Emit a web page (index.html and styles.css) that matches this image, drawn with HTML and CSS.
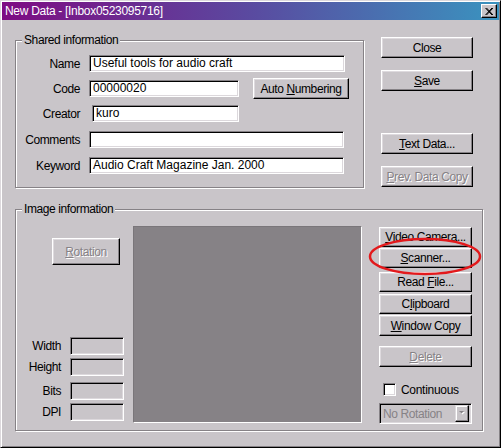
FILE: index.html
```html
<!DOCTYPE html>
<html>
<head>
<meta charset="utf-8">
<title>New Data</title>
<link rel="stylesheet" href="styles.css">
</head>
<body>
<div class="window">
  <div class="titlebar">
    <span class="title">New Data - [Inbox0523095716]</span>
    <span class="tb-btn"><svg width="8" height="7" viewBox="0 0 8 7"><path d="M0.5 0L7 7M1.5 0L8 7M7 0L0.5 7M8 0L1.5 7" stroke="#000" stroke-width="1" fill="none"/></svg></span>
  </div>
  <div class="client">
    <div class="top">
      <div class="group shared">
        <span class="group-label">Shared information</span>
        <div class="row r-name"><span class="lbl">Name</span><span class="input w-name">Useful tools for audio craft</span></div>
        <div class="row r-code"><span class="lbl">Code</span><span class="input w-code">00000020</span><span class="btn b-auto"><span>Auto <u>N</u>umbering</span></span></div>
        <div class="row r-creator"><span class="lbl">Creator</span><span class="input w-creator">kuro</span></div>
        <div class="row r-comments"><span class="lbl">Comments</span><span class="input w-wide"></span></div>
        <div class="row r-keyword"><span class="lbl">Keyword</span><span class="input w-wide">Audio Craft Magazine Jan. 2000</span></div>
      </div>
      <div class="side">
        <span class="btn b-close"><span>Close</span></span>
        <span class="btn b-save"><span><u>S</u>ave</span></span>
        <span class="btn b-text"><span><u>T</u>ext Data...</span></span>
        <span class="btn b-prev disabled"><span><u>P</u>rev. Data Copy</span></span>
      </div>
    </div>
    <div class="group image">
      <span class="group-label">Image information</span>
      <div class="img-left">
        <span class="btn b-rot disabled"><span><u>R</u>otation</span></span>
        <div class="frow f1"><span class="flbl">Width</span><span class="field"></span></div>
        <div class="frow f2"><span class="flbl">Height</span><span class="field"></span></div>
        <div class="frow f3"><span class="flbl">Bits</span><span class="field"></span></div>
        <div class="frow f4"><span class="flbl">DPI</span><span class="field"></span></div>
      </div>
      <div class="preview"></div>
      <div class="img-right">
        <span class="btn ib b-video"><span><u>V</u>ideo Camera...</span></span>
        <span class="btn ib b-scan"><span><u>S</u>canner...</span></span>
        <span class="btn ib b-read"><span>Read <u>F</u>ile...</span></span>
        <span class="btn ib b-clip"><span>C<u>l</u>ipboard</span></span>
        <span class="btn ib b-win"><span><u>W</u>indow Copy</span></span>
        <span class="btn ib b-del disabled"><span><u>D</u>elete</span></span>
        <div class="check-row"><span class="checkbox"></span><span class="check-lbl">Continuous</span></div>
        <div class="combo"><span class="combo-text">No Rotation</span><span class="combo-btn"><svg width="6" height="5" viewBox="0 0 6 5"><path d="M1 1H6L3.5 3.5Z" fill="#fff"/><path d="M0 0H5L2.5 2.5Z" fill="#868286"/></svg></span></div>
      </div>
    </div>
  </div>
  <svg class="mark" width="116" height="42" viewBox="0 0 116 42"><ellipse cx="58" cy="20.5" rx="55" ry="17.5" fill="none" stroke="#e3191c" stroke-width="2.5"/></svg>
</div>
</body>
</html>
```
FILE: styles.css
```css
* { box-sizing: border-box; }
html, body { margin: 0; padding: 0; }
body {
  width: 501px;
  height: 448px;
  overflow: hidden;
  background: #c9c5c9;
  font-family: "Liberation Sans", Arial, sans-serif;
  font-size: 12px;
  color: #000;
}
.window {
  position: relative;
  width: 501px;
  height: 448px;
  background: #c9c5c9;
  border: 1px solid;
  border-color: #dcd8dc #000 #000 #dcd8dc;
  box-shadow: inset 1px 1px 0 #fff, inset -1px -1px 0 #868286;
  padding: 1px;
  display: flex;
  flex-direction: column;
}
.titlebar {
  height: 18px;
  flex: none;
  display: flex;
  align-items: center;
  justify-content: space-between;
  padding: 0 2px 0 3px;
  background: linear-gradient(to right, #7e0c82, #5a4aa0 50%, #3a93bf);
}
.title {
  color: #fff;
  font-size: 12px;
  letter-spacing: -0.3px;
}
.tb-btn {
  width: 16px;
  height: 14px;
  display: flex;
  align-items: center;
  justify-content: center;
  background: #c9c5c9;
  border: 1px solid;
  border-color: #fff #000 #000 #fff;
  box-shadow: inset -1px -1px 0 #868286;
}
.client {
  display: flex;
  flex-direction: column;
}
.top {
  display: flex;
  align-items: flex-start;
  padding: 17px 0 0 13px;
}
.group {
  position: relative;
  border: 1px solid #868286;
  box-shadow: 1px 1px 0 #fff, inset 1px 1px 0 #fff;
}
.group-label {
  position: absolute;
  left: 6px;
  top: -8px;
  padding: 0 2px;
  background: #c9c5c9;
  line-height: 14px;
  letter-spacing: -0.4px;
}
.shared {
  margin-top: 3px;
  width: 349px;
  height: 148px;
  padding-top: 14px;
  display: flex;
  flex-direction: column;
}
.row {
  display: flex;
  align-items: center;
}
.lbl {
  width: 64px;
  margin-right: 9px;
  text-align: right;
  letter-spacing: -0.4px;
}
.input {
  height: 17px;
  background: #fff;
  border: 1px solid;
  border-color: #868286 #fff #fff #868286;
  box-shadow: inset 1px 1px 0 #000, inset -1px -1px 0 #dcd8dc;
  padding: 0 0 0 3px;
  line-height: 15px;
  white-space: nowrap;
  overflow: hidden;
}
.r-name { height: 17px; }
.r-code { height: 21px; margin-top: 6px; }
.r-creator { height: 17px; margin-top: 6px; }
.r-comments { height: 17px; margin-top: 9px; }
.r-keyword { height: 17px; margin-top: 9px; }
.w-name { width: 256px; }
.w-code { width: 150px; }
.w-creator { width: 147px; margin-left: 3px; }
.w-wide { width: 255px; }

.btn {
  display: flex;
  align-items: center;
  justify-content: center;
  background: #c9c5c9;
  border: 1px solid;
  border-color: #fff #000 #000 #fff;
  box-shadow: inset -1px -1px 0 #868286, inset 1px 1px 0 #dedade;
  letter-spacing: -0.4px;
  white-space: nowrap;
  line-height: 14px;
}
.btn u { text-underline-offset: 1px; }
.disabled {
  color: #868286;
  text-shadow: 1px 1px 0 #fff;
}
.b-auto { width: 96px; height: 21px; margin-left: 14px; }

.side {
  margin-left: 17px;
  width: 92px;
  display: flex;
  flex-direction: column;
}
.side .btn { height: 21px; }
.b-save { margin-top: 12px; }
.b-text { margin-top: 42px; }
.b-prev { margin-top: 12px; }

.image {
  margin: 21px 0 0 13px;
  width: 468px;
  height: 222px;
  display: flex;
  align-items: flex-start;
}
.img-left {
  width: 117px;
  display: flex;
  flex-direction: column;
}
.b-rot {
  width: 68px;
  height: 27px;
  margin: 28px 0 0 36px;
}
.frow {
  display: flex;
  align-items: center;
  height: 18px;
}
.f1 { margin-top: 72px; }
.f2 { margin-top: 3px; }
.f3 { margin-top: 6px; }
.f4 { margin-top: 3px; }
.flbl {
  width: 45px;
  margin-right: 9px;
  text-align: right;
  letter-spacing: -0.4px;
}
.field {
  width: 54px;
  height: 18px;
  border: 1px solid;
  border-color: #868286 #fff #fff #868286;
  box-shadow: inset 1px 1px 0 #000, inset -1px -1px 0 #dcd8dc;
}
.preview {
  margin-top: 16px;
  width: 229px;
  height: 197px;
  background: #868286;
  border: 1px solid;
  border-color: #7a767a #fff #fff #7a767a;
}
.img-right {
  margin: 17px 0 0 17px;
  width: 93px;
  display: flex;
  flex-direction: column;
}
.ib { height: 20px; }
.b-scan { margin-top: 1px; }
.b-read { margin-top: 4px; }
.b-clip { margin-top: 2px; }
.b-win { margin-top: 1px; height: 21px; }
.b-del { margin-top: 10px; height: 21px; }
.check-row {
  margin-top: 16px;
  display: flex;
  align-items: center;
  height: 13px;
}
.checkbox {
  margin-left: 4px;
  width: 13px;
  height: 13px;
  background: #fff;
  border: 1px solid;
  border-color: #868286 #fff #fff #868286;
  box-shadow: inset 1px 1px 0 #000, inset -1px -1px 0 #dcd8dc;
}
.check-lbl {
  margin-left: 5px;
  letter-spacing: -0.3px;
}
.combo {
  margin-top: 7px;
  height: 21px;
  display: flex;
  align-items: center;
  justify-content: space-between;
  border: 1px solid;
  border-color: #868286 #fff #fff #868286;
  box-shadow: inset 1px 1px 0 #000, inset -1px -1px 0 #dcd8dc;
  padding: 2px 2px 2px 3px;
}
.combo-text {
  color: #868286;
  letter-spacing: -0.4px;
  line-height: 14px;
}
.combo-btn {
  width: 14px;
  height: 17px;
  display: flex;
  align-items: center;
  justify-content: center;
  background: #c9c5c9;
  border: 1px solid;
  border-color: #dedade #000 #000 #dedade;
  box-shadow: inset -1px -1px 0 #868286, inset 1px 1px 0 #fff;
}
.mark {
  position: absolute;
  left: 366px;
  top: 235px;
}
```
